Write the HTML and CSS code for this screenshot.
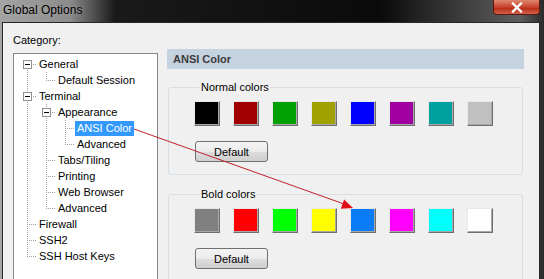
FILE: index.html
```html
<!DOCTYPE html>
<html lang="en">
<head>
    <meta charset="UTF-8">
    <meta name="viewport" content="width=device-width, initial-scale=1.0">
    <title>Global Options</title>

    <link rel="stylesheet" href="styles.css">
</head>
<body>
<div class="window">
    <div class="titlebar">
        <span class="title">Global Options</span>
        <div class="close">
            <svg width="14" height="11" viewBox="0 0 14 11">
                <path d="M3 1.5 L11 9.5 M11 1.5 L3 9.5" stroke="#fff" stroke-width="2.4" stroke-linecap="square"/>
            </svg>
        </div>
    </div>

    <div class="client">
        <div class="category">
            <div class="label">Category:</div>
            <div class="tree">
                <div class="row"><span class="cell first"><span class="box"></span></span><span class="text">General</span></div>
                <div class="row"><span class="cell pipe"></span><span class="cell last"></span><span class="text">Default Session</span></div>
                <div class="row"><span class="cell tee"><span class="box"></span></span><span class="text">Terminal</span></div>
                <div class="row"><span class="cell pipe"></span><span class="cell tee"><span class="box"></span></span><span class="text">Appearance</span></div>
                <div class="row"><span class="cell pipe"></span><span class="cell pipe"></span><span class="cell tee"></span><span class="text selected">ANSI Color</span></div>
                <div class="row"><span class="cell pipe"></span><span class="cell pipe"></span><span class="cell last"></span><span class="text">Advanced</span></div>
                <div class="row"><span class="cell pipe"></span><span class="cell tee"></span><span class="text">Tabs/Tiling</span></div>
                <div class="row"><span class="cell pipe"></span><span class="cell tee"></span><span class="text">Printing</span></div>
                <div class="row"><span class="cell pipe"></span><span class="cell tee"></span><span class="text">Web Browser</span></div>
                <div class="row"><span class="cell pipe"></span><span class="cell last"></span><span class="text">Advanced</span></div>
                <div class="row"><span class="cell tee"></span><span class="text">Firewall</span></div>
                <div class="row"><span class="cell tee"></span><span class="text">SSH2</span></div>
                <div class="row"><span class="cell last"></span><span class="text">SSH Host Keys</span></div>
            </div>
        </div>

        <div class="page">
            <div class="page-title">ANSI Color</div>

            <fieldset class="group">
                <legend>Normal colors</legend>
                <div class="swatches">
                    <span class="swatch black"></span>
                    <span class="swatch maroon"></span>
                    <span class="swatch green"></span>
                    <span class="swatch olive"></span>
                    <span class="swatch blue"></span>
                    <span class="swatch purple"></span>
                    <span class="swatch teal"></span>
                    <span class="swatch silver"></span>
                </div>
                <button class="btn">Default</button>
            </fieldset>

            <fieldset class="group">
                <legend>Bold colors</legend>
                <div class="swatches">
                    <span class="swatch gray"></span>
                    <span class="swatch red"></span>
                    <span class="swatch lime"></span>
                    <span class="swatch yellow"></span>
                    <span class="swatch azure"></span>
                    <span class="swatch magenta"></span>
                    <span class="swatch cyan"></span>
                    <span class="swatch white"></span>
                </div>
                <button class="btn">Default</button>
            </fieldset>
        </div>
    </div>

    <!-- annotation arrow drawn over the dialog -->
    <svg class="arrow" width="544" height="279" viewBox="0 0 544 279">
        <line x1="134" y1="129" x2="344" y2="204" stroke="#c0202a" stroke-width="1"/>
        <polygon points="353,208 344.1,199.6 340.8,208.8" fill="#e0101a"/>
    </svg>
</div>
</body>
</html>
```

FILE: styles.css
```css
body {
    margin: 0;
    background-color: #111;
    font-family: "Liberation Sans", Arial, sans-serif;
    font-size: 11px;
    color: #000;
    overflow: hidden;
}

.window {
    position: relative;
    width: 544px;
    height: 279px;
    display: flex;
    flex-direction: column;
    background: linear-gradient(to right, #a4a4a4 0, #8c8c8c 70px, #1a1a1a 115px, #0a0a0a 380px, #3c3c3c 460px, #5e5e5e 520px, #2a2a2a 544px);
}

.titlebar {
    height: 22px;
    display: flex;
    align-items: flex-start;
    flex: none;
}

.title {
    font-size: 12px;
    line-height: 20px;
    padding-left: 3px;
    color: #000;
    text-shadow: 0 0 4px rgba(200, 200, 200, 0.5);
}

.close {
    margin-left: auto;
    margin-right: 4px;
    width: 47px;
    height: 15px;
    box-sizing: border-box;
    border: 1px solid #5a1a12;
    border-top: none;
    border-radius: 0 0 4px 4px;
    background: linear-gradient(#e08670, #c8442c 50%, #b83018 60%, #d0604a);
    display: flex;
    align-items: center;
    justify-content: center;
}

.client {
    flex: 1;
    display: flex;
    margin: 0 4px 0 2px;
    border: 1px solid #262626;
    border-bottom: none;
    background-color: #f0f0f0;
    min-height: 0;
}

.category {
    display: flex;
    flex-direction: column;
    padding: 11px 0 0 10px;
}

.label {
    line-height: 13px;
    margin-bottom: 6px;
}

.tree {
    flex: 1;
    width: 145px;
    box-sizing: border-box;
    border: 1px solid #828790;
    border-bottom: none;
    background-color: white;
    padding: 2px 0 0 4px;
}

.row {
    display: flex;
    align-items: center;
    height: 16px;
}

.cell {
    flex: none;
    width: 19px;
    height: 16px;
    display: flex;
    align-items: center;
}

.pipe {
    background: repeating-linear-gradient(#a0a0a0 0 1px, transparent 1px 2px) 9px 0 / 1px 16px no-repeat;
}

.tee {
    background:
        repeating-linear-gradient(#a0a0a0 0 1px, transparent 1px 2px) 9px 0 / 1px 16px no-repeat,
        repeating-linear-gradient(to right, #a0a0a0 0 1px, transparent 1px 2px) 11px 8px / 8px 1px no-repeat;
}

.last {
    background:
        repeating-linear-gradient(#a0a0a0 0 1px, transparent 1px 2px) 9px 0 / 1px 9px no-repeat,
        repeating-linear-gradient(to right, #a0a0a0 0 1px, transparent 1px 2px) 11px 8px / 8px 1px no-repeat;
}

.first {
    background:
        repeating-linear-gradient(#a0a0a0 0 1px, transparent 1px 2px) 9px 8px / 1px 8px no-repeat,
        repeating-linear-gradient(to right, #a0a0a0 0 1px, transparent 1px 2px) 11px 8px / 8px 1px no-repeat;
}

.box {
    width: 9px;
    height: 9px;
    box-sizing: border-box;
    margin-left: 5px;
    border: 1px solid #919191;
    background: linear-gradient(#000, #000) center / 5px 1px no-repeat, #fff;
}

.text {
    padding: 0 2px;
    line-height: 15px;
    white-space: nowrap;
}

.selected {
    background-color: #3399ff;
    color: white;
}

.page {
    width: 357px;
    margin-left: 9px;
    padding-top: 26px;
}

.page-title {
    height: 20px;
    line-height: 20px;
    padding-left: 6px;
    background-color: #c5d3e0;
    color: #3c3c3c;
    font-weight: bold;
    margin-bottom: 12px;
}

.group {
    margin: 0 0 13px 1px;
    width: 355px;
    box-sizing: border-box;
    padding: 0 0 12px 25px;
    border: 1px solid #d5dfe5;
    border-radius: 3px;
    min-width: 0;
}

.group legend {
    margin-left: 5px;
    padding: 0 2px;
    line-height: 13px;
}

.swatches {
    display: flex;
    gap: 13px;
    padding-top: 7px;
}

.swatch {
    width: 26px;
    height: 25px;
    box-sizing: border-box;
    border: 1px solid;
    border-color: #e8e8e8 #6e6e6e #6e6e6e #e8e8e8;
    box-shadow: inset -1px -1px 0 #a8a8a8;
}

.black { background-color: #000; }
.maroon { background-color: #a00000; }
.green { background-color: #00a000; }
.olive { background-color: #a0a000; }
.blue { background-color: #0000ff; }
.purple { background-color: #a000a0; }
.teal { background-color: #00a0a0; }
.silver { background-color: #c0c0c0; }
.gray { background-color: #808080; }
.red { background-color: #ff0000; }
.lime { background-color: #00ff00; }
.yellow { background-color: #ffff00; }
.azure { background-color: #0a7cf5; }
.magenta { background-color: #ff00ff; }
.cyan { background-color: #00ffff; }
.white { background-color: #ffffff; }

.btn {
    display: block;
    margin: 15px 0 0 1px;
    width: 73px;
    height: 21px;
    padding: 0;
    border: 1px solid #707070;
    border-radius: 3px;
    background: linear-gradient(#f4f4f4 0, #ebebeb 50%, #dddddd 51%, #cfcfcf 100%);
    font-family: "Liberation Sans", Arial, sans-serif;
    font-size: 11px;
    color: #000;
}

.arrow {
    position: absolute;
    left: 0;
    top: 0;
    pointer-events: none;
}
```
